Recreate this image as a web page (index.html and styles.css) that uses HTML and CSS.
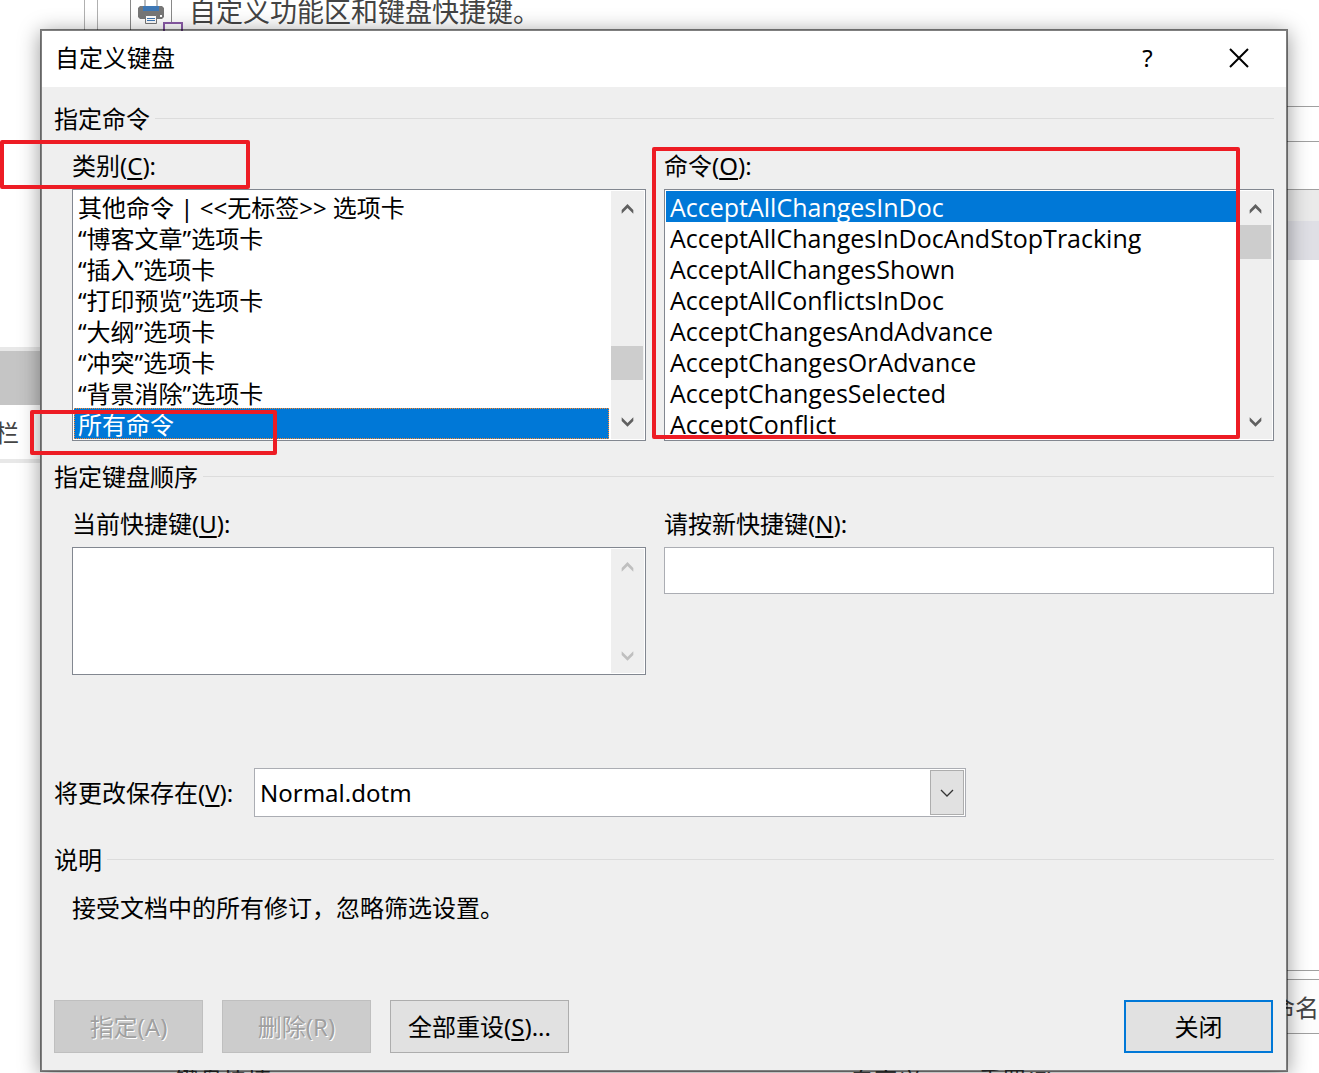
FILE: index.html
```html
<!DOCTYPE html>
<html lang="zh-CN">
<head>
    <meta charset="UTF-8">
    <meta name="viewport" content="width=device-width, initial-scale=1.0">
    <title>自定义键盘</title>
    <link rel="stylesheet" href="styles.css">
</head>
<body>

    <!-- 后面的选项窗口 -->
    <div class="backdrop">
        <div class="back-top">
            <span class="back-frame"></span>
            <span class="back-tile">
                <svg class="printer" width="26" height="25" viewBox="0 0 26 25">
                    <path d="M7 0v8h12V0" fill="#fff" stroke="#777" stroke-width="1"/>
                    <path d="M2 6h3v5h16V6h3l2 2v9l-2 2H2l-2-2V8z" fill="#777"/>
                    <path d="M5 6h16v5H5z" fill="#3f78b5"/>
                    <path d="M7.5 15.5h11v8h-11z" fill="#fff" stroke="#777"/>
                    <path d="M9 18h8v1H9zM9 20h8v1H9z" fill="#3f78b5"/>
                    <path d="M22 15h2v2h-2z" fill="#fff"/>
                </svg>
                <span class="back-badge"></span>
            </span>
            <span class="back-title">自定义功能区和键盘快捷键。</span>
        </div>
        <div class="back-left">
            <div class="back-selected"></div>
            <div class="back-item">栏</div>
        </div>
        <div class="back-right">
            <div class="back-search"></div>
            <div class="back-head"></div>
            <div class="back-row"></div>
            <div class="back-list"></div>
            <div class="back-rename">命名</div>
        </div>
        <div class="back-bottom">
            <span>键盘快捷</span>
            <span>自定义:</span>
            <span>重置(E)</span>
        </div>
    </div>

    <div class="dialog" role="dialog" aria-labelledby="dialog-title">
        <div class="titlebar">
            <h1 id="dialog-title">自定义键盘</h1>
            <button type="button" class="title-button">?</button>
            <button type="button" class="title-button" aria-label="关闭">
                <svg width="20" height="20" viewBox="0 0 20 20"><path d="M1 1l18 18M19 1L1 19" fill="none" stroke="#000" stroke-width="2"/></svg>
            </button>
        </div>

        <form class="content">
            <!-- 指定命令 -->
            <h2 class="group-title">指定命令</h2>
            <div class="columns">
                <div class="column">
                    <label for="category">类别(<u>C</u>):</label>
                    <div class="box list-box">
                        <select id="category" size="8">
                            <option>其他命令 | &lt;&lt;无标签&gt;&gt; 选项卡</option>
                            <option>“博客文章”选项卡</option>
                            <option>“插入”选项卡</option>
                            <option>“打印预览”选项卡</option>
                            <option>“大纲”选项卡</option>
                            <option>“冲突”选项卡</option>
                            <option>“背景消除”选项卡</option>
                            <option class="focused" selected>所有命令</option>
                        </select>
                        <div class="scrollbar">
                            <svg class="arrow" viewBox="0 0 34 34"><path d="M11 23v-4l6-6 6 6v4l-6-6z"/></svg>
                            <div class="track"><div class="thumb thumb-low"></div></div>
                            <svg class="arrow" viewBox="0 0 34 34"><path d="M11 12v4l6 6 6-6v-4l-6 6z"/></svg>
                        </div>
                    </div>
                </div>
                <div class="column column-wide">
                    <label for="command">命令(<u>O</u>):</label>
                    <div class="box list-box">
                        <select id="command" class="latin-list" size="8">
                            <option selected>AcceptAllChangesInDoc</option>
                            <option>AcceptAllChangesInDocAndStopTracking</option>
                            <option>AcceptAllChangesShown</option>
                            <option>AcceptAllConflictsInDoc</option>
                            <option>AcceptChangesAndAdvance</option>
                            <option>AcceptChangesOrAdvance</option>
                            <option>AcceptChangesSelected</option>
                            <option>AcceptConflict</option>
                        </select>
                        <div class="scrollbar">
                            <svg class="arrow" viewBox="0 0 34 34"><path d="M11 23v-4l6-6 6 6v4l-6-6z"/></svg>
                            <div class="track"><div class="thumb"></div></div>
                            <svg class="arrow" viewBox="0 0 34 34"><path d="M11 12v4l6 6 6-6v-4l-6 6z"/></svg>
                        </div>
                    </div>
                </div>
            </div>

            <!-- 指定键盘顺序 -->
            <h2 class="group-title group-keys">指定键盘顺序</h2>
            <div class="columns">
                <div class="column">
                    <label for="current">当前快捷键(<u>U</u>):</label>
                    <div class="box keys-box">
                        <textarea id="current" readonly></textarea>
                        <div class="scrollbar scrollbar-off">
                            <svg class="arrow" viewBox="0 0 34 34"><path d="M11 23v-4l6-6 6 6v4l-6-6z"/></svg>
                            <div class="track"></div>
                            <svg class="arrow" viewBox="0 0 34 34"><path d="M11 12v4l6 6 6-6v-4l-6 6z"/></svg>
                        </div>
                    </div>
                </div>
                <div class="column column-wide">
                    <label for="newkey">请按新快捷键(<u>N</u>):</label>
                    <input type="text" id="newkey" class="key-input">
                </div>
            </div>

            <div class="save-row">
                <label for="save-in">将更改保存在(<u>V</u>):</label>
                <div class="combo">
                    <select id="save-in">
                        <option>Normal.dotm</option>
                    </select>
                    <span class="combo-arrow">
                        <svg width="14" height="8" viewBox="0 0 14 8"><path d="M1 1l6 6 6-6" fill="none" stroke="#333" stroke-width="1.3"/></svg>
                    </span>
                </div>
            </div>

            <!-- 说明 -->
            <h2 class="group-title group-about">说明</h2>
            <p class="about">接受文档中的所有修订，忽略筛选设置。</p>

            <div class="buttons">
                <button type="button" class="btn" disabled>指定(A)</button>
                <button type="button" class="btn" disabled>删除(R)</button>
                <button type="button" class="btn btn-reset">全部重设(<u>S</u>)...</button>
                <button type="button" class="btn btn-close">关闭</button>
            </div>
        </form>
    </div>

    <!-- 红框标注 -->
    <div class="mark mark-category"></div>
    <div class="mark mark-all"></div>
    <div class="mark mark-command"></div>

</body>
</html>
```

FILE: styles.css
```css
* {
    box-sizing: border-box;
}

body {
    position: relative;
    margin: 0;
    padding: 29px 31px 1px 40px;
    overflow: hidden;
    background-color: #fff;
    color: #000;
    font-family: "Noto Sans", "Noto Sans CJK SC", sans-serif;
    font-size: 24px;
    line-height: 32px;
}

select,
input,
textarea,
button {
    margin: 0;
    border: 0;
    border-radius: 0;
    outline: none;
    color: inherit;
    font: inherit;
}

svg {
    display: block;
}

u {
    text-underline-offset: 3px;
    text-decoration-thickness: 2px;
}

/* 后面的窗口 */
.backdrop {
    position: absolute;
    inset: 0;
    display: grid;
    grid-template-columns: 40px 1fr 32px;
    grid-template-rows: 30px 1fr 5px;
    overflow: hidden;
    color: #444;
}

.back-top {
    grid-column: 1 / -1;
    display: flex;
    padding-left: 84px;
}

.back-frame {
    width: 14px;
    border: solid #b0b0b0;
    border-width: 0 1px;
}

.back-tile {
    position: relative;
    width: 42px;
    height: 30px;
    margin-left: 32px;
    padding-left: 7px;
    border: solid #888;
    border-width: 0 1px;
}

.back-badge {
    position: absolute;
    top: 22px;
    left: 32px;
    width: 20px;
    height: 20px;
    border: 2px solid #8a5ba8;
    background-color: #fff;
}

.back-title {
    margin-left: 17px;
    font-size: 27px;
    line-height: 24px;
}

.back-left {
    padding-top: 317px;
}

.back-selected {
    height: 58px;
    border-top: 4px solid #e8e8e8;
    background-color: #c5c5c5;
}

.back-item {
    display: flex;
    justify-content: flex-end;
    height: 58px;
    padding-right: 21px;
    border-bottom: 4px solid #e8e8e8;
    line-height: 56px;
}

.back-right {
    grid-column: 3;
    padding-top: 76px;
}

.back-search {
    height: 36px;
    border: solid #a0a0a0;
    border-width: 1px 0;
}

.back-head {
    height: 32px;
    margin-top: 47px;
    border-top: 1px solid #a0a0a0;
    background-color: #eaeaea;
}

.back-row {
    height: 39px;
    background-color: #dfdfe5;
}

.back-list {
    height: 711px;
    border-bottom: 1px solid #a0a0a0;
}

.back-rename {
    display: flex;
    justify-content: flex-end;
    height: 55px;
    margin-top: 8px;
    border: solid #a0a0a0;
    border-width: 1px 0;
    background-color: #fdfdfd;
    line-height: 56px;
    white-space: nowrap;
}

.back-bottom {
    grid-column: 1 / -1;
    display: flex;
    gap: 50px;
    padding-left: 175px;
    line-height: 24px;
}

.back-bottom span:nth-child(2) {
    margin-left: auto;
}

.back-bottom span:nth-child(3) {
    margin-right: 265px;
}

/* 对话框 */
.dialog {
    position: relative;
    border: 2px solid rgba(0, 0, 0, 0.5);
    background-color: #efefef;
    background-clip: padding-box;
    box-shadow: 0 3px 20px rgba(0, 0, 0, 0.4);
}

.titlebar {
    display: flex;
    align-items: center;
    height: 56px;
    padding: 0 2px 2px 13px;
    background-color: #fff;
}

.titlebar h1 {
    flex: 1;
    margin: 0;
    font-size: 24px;
    font-weight: normal;
}

.title-button {
    display: flex;
    align-items: center;
    justify-content: center;
    width: 91px;
    height: 54px;
    padding: 0;
    background: none;
}

.content {
    padding: 16px 12px 17px;
}

.group-title {
    display: flex;
    align-items: center;
    gap: 5px;
    margin: 0;
    font-size: 24px;
    font-weight: normal;
    line-height: 32px;
}

.group-title::after {
    content: "";
    flex: 1;
    height: 1px;
    margin-bottom: 2px;
    background-color: #dcdcdc;
}

.group-keys {
    margin-top: 20px;
}

.group-about {
    margin-top: 27px;
}

.columns {
    display: flex;
    gap: 18px;
    padding: 15px 0 0 18px;
}

.column {
    display: flex;
    flex: 574 1 0;
    flex-direction: column;
    gap: 7px;
    min-width: 0;
}

.column-wide {
    flex-grow: 610;
}

.box {
    display: flex;
    padding: 1px;
    border: 1px solid #828790;
    background-color: #fff;
}

.box select,
.box textarea {
    flex: 1;
    min-width: 0;
    padding: 0;
    background-color: #fff;
    resize: none;
}

.list-box {
    height: 252px;
}

.keys-box {
    height: 128px;
}

.list-box select {
    overflow: hidden;
    scrollbar-width: none;
}

.list-box option {
    display: flex;
    align-items: center;
    height: 31px;
    min-height: 31px;
    padding: 0 4px;
}

.list-box .latin-list {
    font-family: "Open Sans", "Noto Sans", sans-serif;
    font-size: 25px;
}

.list-box option:checked {
    background: #0078d7 linear-gradient(#0078d7, #0078d7);
    color: #fff;
}

.list-box .focused {
    outline: 1px dotted #ff8728;
    outline-offset: -1px;
}

.scrollbar {
    display: flex;
    flex-direction: column;
    width: 33px;
    margin-left: 2px;
    background-color: #efefef;
    fill: #606060;
}

.scrollbar-off {
    fill: #bfbfbf;
}

.arrow {
    width: 33px;
    height: 34px;
}

.track {
    flex: 1;
}

.thumb {
    width: 32px;
    height: 34px;
    background-color: #cdcdcd;
}

.thumb-low {
    margin-top: 121px;
}

.key-input {
    width: 100%;
    height: 47px;
    padding: 0 6px;
    border: 1px solid #abadb3;
    background-color: #fff;
}

.save-row {
    display: flex;
    align-items: center;
    gap: 18px;
    margin-top: 93px;
}

.save-row label {
    flex: 0 0 182px;
    white-space: nowrap;
}

.combo {
    position: relative;
    flex: 0 1 712px;
}

.combo select {
    display: block;
    width: 100%;
    height: 49px;
    padding: 0 40px 0 5px;
    border: 1px solid #abadb3;
    background-color: #fff;
    appearance: none;
}

.combo-arrow {
    position: absolute;
    top: 2px;
    right: 2px;
    bottom: 2px;
    display: flex;
    align-items: center;
    justify-content: center;
    width: 34px;
    border: 1px solid #adadad;
    background-color: #e1e1e1;
    pointer-events: none;
}

.about {
    margin: 16px 18px 76px;
}

.buttons {
    display: flex;
    gap: 19px;
    padding-right: 1px;
}

.btn {
    width: 149px;
    height: 53px;
    padding: 0;
    border: 1px solid #adadad;
    background-color: #e1e1e1;
}

.btn:disabled {
    border-color: #bfbfbf;
    background-color: #ccc;
    color: #a0a0a0;
    text-shadow: 1px 1px #fff;
}

.btn-reset {
    width: 179px;
}

.btn-close {
    margin-left: auto;
    border: 2px solid #0078d7;
}

/* 红框 */
.mark {
    position: absolute;
    border: 4px solid #ed1c24;
    border-radius: 2px;
    pointer-events: none;
}

.mark-category {
    top: 140px;
    left: 0;
    width: 250px;
    height: 49px;
}

.mark-all {
    top: 410px;
    left: 30px;
    width: 247px;
    height: 45px;
}

.mark-command {
    top: 147px;
    left: 652px;
    width: 588px;
    height: 292px;
}
```
